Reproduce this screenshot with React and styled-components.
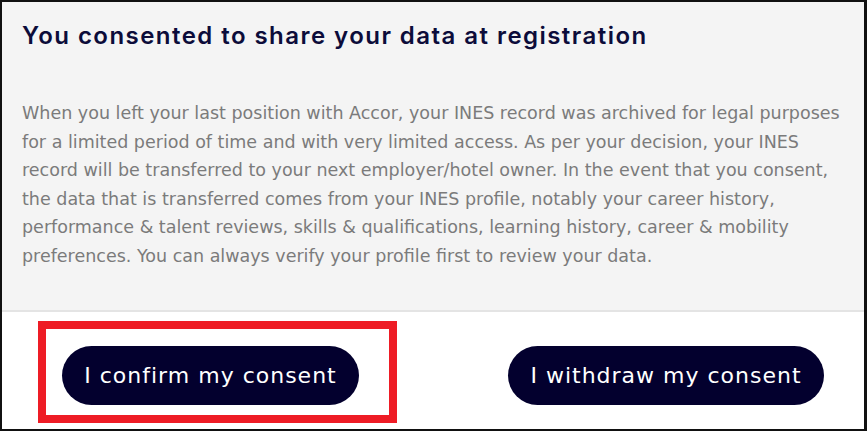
import React from 'react';
import styled, { createGlobalStyle } from 'styled-components';

const GlobalStyle = createGlobalStyle`
  html, body {
    margin: 0;
    padding: 0;
    background: #ffffff;
  }
  * {
    box-sizing: border-box;
  }
`;

const Frame = styled.div`
  width: 867px;
  height: 431px;
  display: flex;
  flex-direction: column;
  border-top: 2px solid #111;
  border-left: 2px solid #111;
  border-right: 3px solid #111;
  border-bottom: 2px solid #111;
  font-family: 'DejaVu Sans', Inter, sans-serif;
  overflow: hidden;
`;

const Body = styled.div`
  background: #f4f4f4;
  height: 310px;
  padding: 18px 20px 0 20px;
  border-bottom: 2px solid #e4e4e4;
`;

const Title = styled.h2`
  margin: 0;
  font-family: Inter, 'DejaVu Sans', sans-serif;
  font-size: 24px;
  line-height: 32px;
  font-weight: 600;
  letter-spacing: 1.45px;
  color: #0c0c3a;
`;

const Text = styled.p`
  margin: 47px 0 0;
  font-size: 17.5px;
  line-height: 28.6px;
  color: #7b7b7b;
  white-space: nowrap;
`;

const Footer = styled.div`
  flex: 1;
  background: #fff;
  display: flex;
  align-items: flex-start;
  justify-content: space-between;
  padding: 34px 40px 0 60px;
`;

// red annotation frame drawn over the first button
const Marked = styled.span`
  position: relative;
  display: inline-flex;

  &::after {
    content: '';
    position: absolute;
    left: -24px;
    top: -25px;
    right: -38px;
    bottom: -18px;
    border: 8px solid #ee1c25;
    pointer-events: none;
  }
`;

const Button = styled.button`
  height: 59px;
  width: ${(p) => p.$w}px;
  border: none;
  border-radius: 30px;
  background: #03002e;
  color: #fff;
  font-family: inherit;
  font-size: 22px;
  letter-spacing: 1px;
  font-weight: 400;
  padding: 0;
  cursor: pointer;
`;

export default function App() {
  return (
    <>
      <GlobalStyle />
      <Frame>
        <Body>
          <Title>You consented to share your data at registration</Title>
          <Text>
            When you left your last position with Accor, your INES record was archived for legal purposes<br />
            for a limited period of time and with very limited access. As per your decision, your INES<br />
            record will be transferred to your next employer/hotel owner. In the event that you consent,<br />
            the data that is transferred comes from your INES profile, notably your career history,<br />
            performance &amp; talent reviews, skills &amp; qualifications, learning history, career &amp; mobility<br />
            preferences. You can always verify your profile first to review your data.
          </Text>
        </Body>
        <Footer>
          <Marked>
            <Button $w={297}>I confirm my consent</Button>
          </Marked>
          <Button $w={316}>I withdraw my consent</Button>
        </Footer>
      </Frame>
    </>
  );
}
